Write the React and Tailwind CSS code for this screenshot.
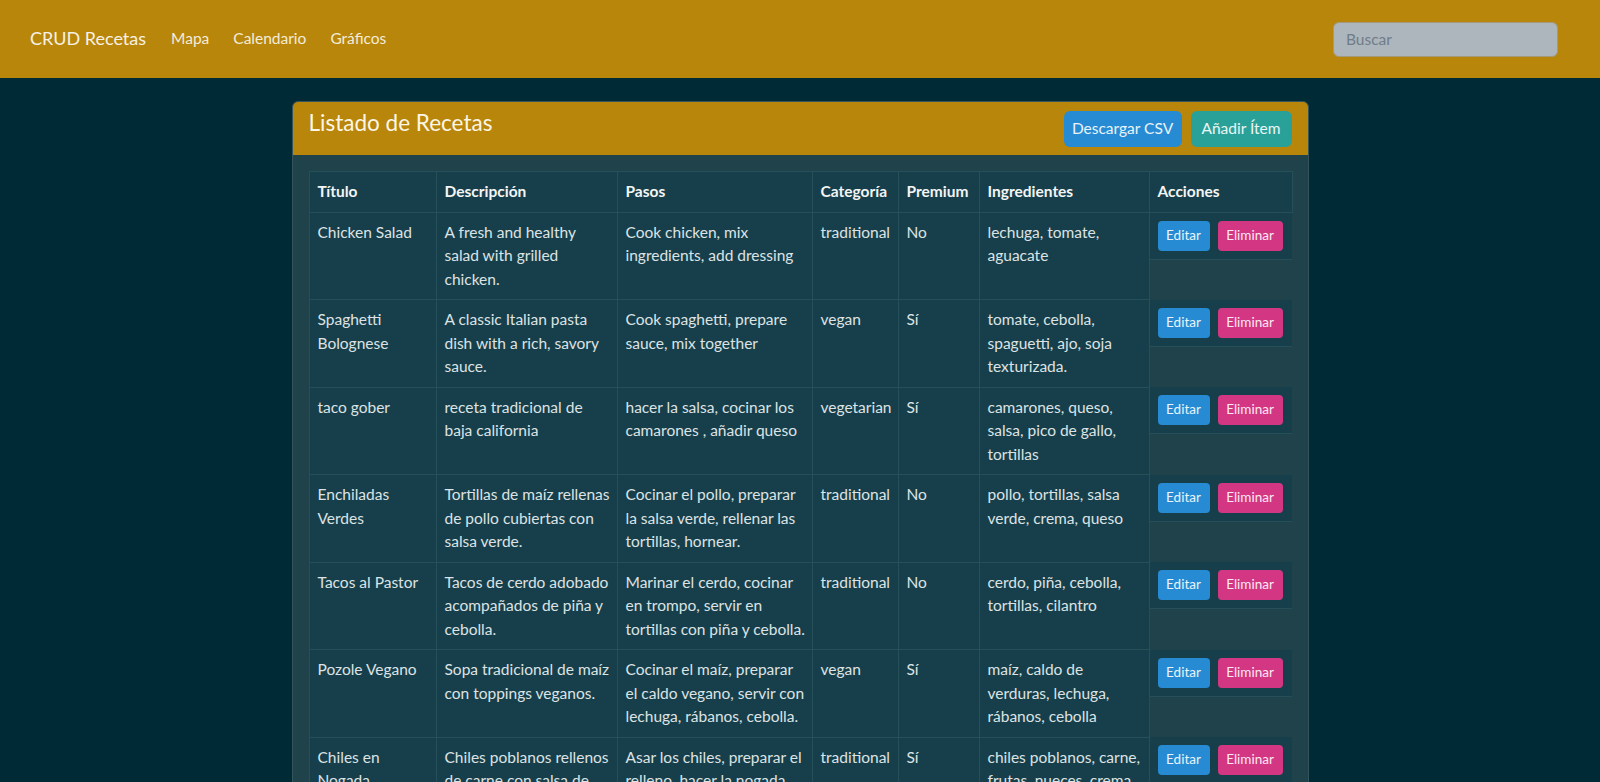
import React from 'react';

const recetas = [
  {
    titulo: ['Chicken Salad'],
    descripcion: ['A fresh and healthy', 'salad with grilled', 'chicken.'],
    pasos: ['Cook chicken, mix', 'ingredients, add dressing'],
    categoria: 'traditional',
    premium: 'No',
    ingredientes: ['lechuga, tomate,', 'aguacate'],
  },
  {
    titulo: ['Spaghetti', 'Bolognese'],
    descripcion: ['A classic Italian pasta', 'dish with a rich, savory', 'sauce.'],
    pasos: ['Cook spaghetti, prepare', 'sauce, mix together'],
    categoria: 'vegan',
    premium: 'Sí',
    ingredientes: ['tomate, cebolla,', 'spaguetti, ajo, soja', 'texturizada.'],
  },
  {
    titulo: ['taco gober'],
    descripcion: ['receta tradicional de', 'baja california'],
    pasos: ['hacer la salsa, cocinar los', 'camarones , añadir queso'],
    categoria: 'vegetarian',
    premium: 'Sí',
    ingredientes: ['camarones, queso,', 'salsa, pico de gallo,', 'tortillas'],
  },
  {
    titulo: ['Enchiladas', 'Verdes'],
    descripcion: ['Tortillas de maíz rellenas', 'de pollo cubiertas con', 'salsa verde.'],
    pasos: ['Cocinar el pollo, preparar', 'la salsa verde, rellenar las', 'tortillas, hornear.'],
    categoria: 'traditional',
    premium: 'No',
    ingredientes: ['pollo, tortillas, salsa', 'verde, crema, queso'],
  },
  {
    titulo: ['Tacos al Pastor'],
    descripcion: ['Tacos de cerdo adobado', 'acompañados de piña y', 'cebolla.'],
    pasos: ['Marinar el cerdo, cocinar', 'en trompo, servir en', 'tortillas con piña y cebolla.'],
    categoria: 'traditional',
    premium: 'No',
    ingredientes: ['cerdo, piña, cebolla,', 'tortillas, cilantro'],
  },
  {
    titulo: ['Pozole Vegano'],
    descripcion: ['Sopa tradicional de maíz', 'con toppings veganos.'],
    pasos: ['Cocinar el maíz, preparar', 'el caldo vegano, servir con', 'lechuga, rábanos, cebolla.'],
    categoria: 'vegan',
    premium: 'Sí',
    ingredientes: ['maíz, caldo de', 'verduras, lechuga,', 'rábanos, cebolla'],
  },
  {
    titulo: ['Chiles en', 'Nogada'],
    descripcion: ['Chiles poblanos rellenos', 'de carne con salsa de', 'nuez.'],
    pasos: ['Asar los chiles, preparar el', 'relleno, hacer la nogada,', 'decorar con granada.'],
    categoria: 'traditional',
    premium: 'Sí',
    ingredientes: ['chiles poblanos, carne,', 'frutas, nueces, crema,', 'granada'],
  },
];

function Lines({ lines }) {
  return lines.map((l, i) => (
    <React.Fragment key={i}>
      {l}
      {i < lines.length - 1 && <br />}
    </React.Fragment>
  ));
}

const td = 'bg-[#173f4b] border border-[#25505a] px-2 py-2 align-top whitespace-nowrap';
const th = 'bg-[#173f4b] border border-[#25505a] px-2 py-2 text-left font-bold text-[#f3f5f5]';

export default function App() {
  return (
    <div className="min-h-screen bg-[#002b36] font-['Lato','Open_Sans',sans-serif] text-[15.5px] leading-[23.5px] text-[#dde3e4]">
      {/* navbar */}
      <nav className="h-[78px] bg-[#b8860b] flex items-center pl-[30px] pr-[42px]">
        <span className="text-[18px] text-[#f6f1e4] mr-[25px]">CRUD Recetas</span>
        <div className="flex gap-6 text-[15.5px] text-[#f3ecd9]">
          <span>Mapa</span>
          <span>Calendario</span>
          <span>Gráficos</span>
        </div>
        <input
          placeholder="Buscar"
          className="ml-auto w-[225px] h-[35px] rounded-md bg-[#adb5bd] border border-[#a39a7e] px-3 text-[15.5px] placeholder:text-[#6f7d88] outline-none"
        />
      </nav>

      <div className="w-[1017px] mx-auto mt-[23px] rounded-md border border-[#35555c] bg-[#20424a] overflow-hidden">
        <div className="bg-[#b8860b] h-[53px] flex items-start justify-between pl-4 pr-4 pt-[9px]">
          <h4 className="text-[22.5px] leading-[28px] text-[#fbf5e6] mt-[-2px]">Listado de Recetas</h4>
          <div className="flex gap-[9px]">
            <button className="w-[118px] h-[36px] rounded-md bg-[#268bd2] text-[#eaf3fa] text-[15.5px]">Descargar CSV</button>
            <button className="w-[101px] h-[36px] rounded-md bg-[#2aa198] text-[#eaf6f4] text-[15.5px]">Añadir Ítem</button>
          </div>
        </div>

        <div className="p-4">
          <table className="w-[983px] table-fixed border-collapse">
            <colgroup>
              <col className="w-[127px]" />
              <col className="w-[181px]" />
              <col className="w-[195px]" />
              <col className="w-[86px]" />
              <col className="w-[81px]" />
              <col className="w-[170px]" />
              <col className="w-[143px]" />
            </colgroup>
            <thead>
              <tr>
                <th className={th}>Título</th>
                <th className={th}>Descripción</th>
                <th className={th}>Pasos</th>
                <th className={th}>Categoría</th>
                <th className={th}>Premium</th>
                <th className={th}>Ingredientes</th>
                <th className={th}>Acciones</th>
              </tr>
            </thead>
            <tbody>
              {recetas.map((r, i) => (
                <tr key={i}>
                  <td className={td}><Lines lines={r.titulo} /></td>
                  <td className={td}><Lines lines={r.descripcion} /></td>
                  <td className={td}><Lines lines={r.pasos} /></td>
                  <td className={td}>{r.categoria}</td>
                  <td className={td}>{r.premium}</td>
                  <td className={td}><Lines lines={r.ingredientes} /></td>
                  <td className="p-0 align-top border-l border-[#25505a]">
                    <div className="flex gap-2 px-2 py-2 bg-[#173f4b] border-b border-[#25505a]">
                      <button className="w-[52px] h-[30px] rounded bg-[#268bd2] text-[13.5px] text-[#eaf3fa]">Editar</button>
                      <button className="w-[65px] h-[30px] rounded bg-[#d33682] text-[13.5px] text-[#fbe9f2]">Eliminar</button>
                    </div>
                  </td>
                </tr>
              ))}
            </tbody>
          </table>
        </div>
      </div>
    </div>
  );
}
